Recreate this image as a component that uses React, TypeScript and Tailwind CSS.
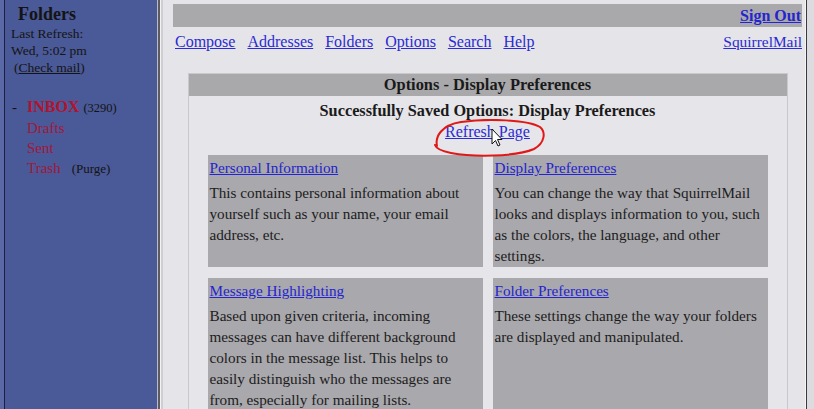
import React from "react";

const serif = { fontFamily: '"Liberation Serif", "Times New Roman", serif' };

const navLinks = ["Compose", "Addresses", "Folders", "Options", "Search", "Help"];

const sections = [
  {
    title: "Personal Information",
    body: "This contains personal information about yourself such as your name, your email address, etc.",
  },
  {
    title: "Display Preferences",
    body: "You can change the way that SquirrelMail looks and displays information to you, such as the colors, the language, and other settings.",
  },
  {
    title: "Message Highlighting",
    body: "Based upon given criteria, incoming messages can have different background colors in the message list. This helps to easily distinguish who the messages are from, especially for mailing lists.",
  },
  {
    title: "Folder Preferences",
    body: "These settings change the way your folders are displayed and manipulated.",
  },
];

function Sidebar() {
  return (
    <div className="flex h-full shrink-0">
      <div className="w-[4px] bg-[#5a69a6]" />
      <div className="w-[1px] bg-[#1b1f45]" />
      <div className="w-[152px] bg-[#4a5997] text-[#141414]">
        <div className="pl-[13px] pt-[3px] text-[18px] font-bold leading-[22px]">Folders</div>
        <div className="pl-[6px] text-[13.5px] leading-[17px]">
          <div>Last Refresh:</div>
          <div>Wed, 5:02 pm</div>
          <div className="pl-[3px]">
            (<span className="underline">Check mail</span>)
          </div>
        </div>
        <div className="mt-[21px] pl-[7px] text-[15px] leading-[20px]">
          <div className="flex items-baseline">
            <span className="w-[15px]">-</span>
            <span className="text-[16px] font-bold text-[#b5122c]">INBOX</span>
            <span className="ml-[4px] text-[12.5px]">(3290)</span>
          </div>
          <div className="pl-[15px] text-[#a3173a]">Drafts</div>
          <div className="pl-[15px] text-[#a3173a]">Sent</div>
          <div className="flex items-baseline pl-[15px]">
            <span className="text-[#a3173a]">Trash</span>
            <span className="ml-[11px] text-[13px]">(Purge)</span>
          </div>
        </div>
      </div>
      <div className="w-[1px] bg-[#b9bccb]" />
      <div className="w-[2px] bg-[#5c5c60]" />
      <div className="w-[1px] bg-[#f2f2f4]" />
      <div className="w-[2px] bg-[#cfcfd3]" />
    </div>
  );
}

function Annotation() {
  return (
    <svg
      className="pointer-events-none absolute left-[270px] top-[119px]"
      width="130"
      height="40"
      viewBox="0 0 130 40"
    >
      <path
        d="M4 27 C 2 18, 8 6, 28 3 C 55 -1, 95 1, 107 8 C 113 13, 112 24, 101 30 C 82 38, 40 38, 18 34 C 8 32, 3 29, 2 26"
        fill="none"
        stroke="#e01818"
        strokeWidth="2"
        strokeLinecap="round"
      />
      <path
        d="M59 10 L59 25 L62.5 21.5 L65 27 L67 26 L64.5 20.5 L69 20.5 Z"
        fill="#ffffff"
        stroke="#111111"
        strokeWidth="1"
        strokeLinejoin="round"
      />
    </svg>
  );
}

export default function App() {
  return (
    <div className="flex h-[409px] w-[814px] overflow-hidden bg-[#e5e4e8]" style={serif}>
      <Sidebar />
      <div className="relative flex-1 bg-[#e5e4e8] pl-[10px] pr-[3px] pt-[4px]">
        <div className="flex h-[23px] items-center justify-end bg-[#a9a9ab] pr-[1px]">
          <a className="text-[16px] font-bold text-[#2424d0] underline">Sign Out</a>
        </div>
        <div className="flex h-[29px] items-center justify-between pl-[2px] text-[16px] leading-[21px] text-[#2b2bd2]">
          <div className="flex gap-[12px]">
            {navLinks.map((l) => (
              <a key={l} className="underline">
                {l}
              </a>
            ))}
          </div>
          <a className="text-[15.4px] underline">SquirrelMail</a>
        </div>
        <div className="mx-auto mt-[17px] w-[600px] border border-[#c9c9cc] bg-[#e6e5e9]">
          <div className="flex h-[22px] items-center justify-center bg-[#a9a9ab] text-[16.4px] font-bold text-[#1a1a1a]">
            Options - Display Preferences
          </div>
          <div className="pt-[4px] text-center text-[16px] leading-[21px]">
            <div className="text-[16.3px] font-bold text-[#1a1a1a]">
              Successfully Saved Options: Display Preferences
            </div>
            <a className="text-[#2b2bd2] underline">Refresh Page</a>
          </div>
          <div className="mx-auto mt-[13px] grid w-[560px] grid-cols-2 gap-x-[10px] gap-y-[11px]">
            {sections.map((s) => (
              <div key={s.title} className="bg-[#a9a8ac] px-[2px] pb-[1px] pt-[2px] text-[15.2px] leading-[21px]">
                <a className="mb-[4px] block text-[#2424d0] underline">{s.title}</a>
                <p className="text-[#1c1c1c]">{s.body}</p>
              </div>
            ))}
          </div>
        </div>
        <Annotation />
      </div>
      <div className="flex h-full shrink-0">
        <div className="w-[1px] bg-[#f4f4f6]" />
        <div className="w-[1px] bg-[#3a3a3e]" />
        <div className="w-[7px] bg-[#dcdce0]" />
      </div>
    </div>
  );
}
